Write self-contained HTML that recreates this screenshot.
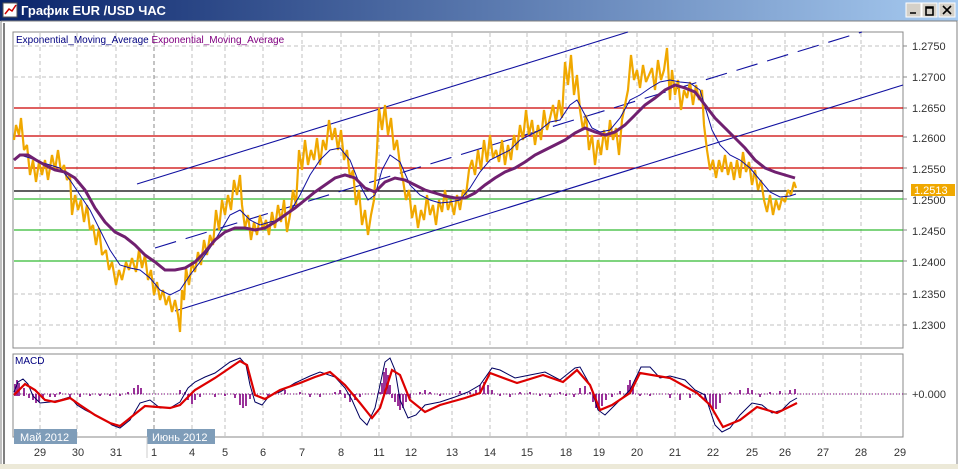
<!DOCTYPE html>
<html><head><meta charset="utf-8"><style>
html,body{margin:0;padding:0;width:958px;height:469px;overflow:hidden;background:#ece9d8;font-family:"Liberation Sans",sans-serif}
svg{display:block}
</style></head><body>
<svg width="958" height="469" xmlns="http://www.w3.org/2000/svg" font-family="Liberation Sans, DejaVu Sans, sans-serif">
<defs>
<linearGradient id="tb" x1="0" y1="0" x2="1" y2="0"><stop offset="0" stop-color="#0a246a"/><stop offset="1" stop-color="#a6caf0"/></linearGradient>
</defs>
<rect x="0" y="0" width="958" height="469" fill="#ece9d8"/>
<rect x="0" y="0" width="958" height="21" fill="url(#tb)"/>
<rect x="3" y="3" width="14" height="14" fill="#fff" stroke="#555"/>
<polyline points="5,14 9,9 12,11 16,5" fill="none" stroke="#c00" stroke-width="1.5"/>
<text x="21" y="15" fill="#fff" font-size="13" font-weight="bold">График EUR /USD  ЧАС</text>
<g fill="#d4d0c8" stroke="#fff"><rect x="906" y="3" width="15" height="14"/><rect x="922" y="3" width="15" height="14"/><rect x="939" y="3" width="16" height="14"/></g>
<path d="M910 13h6M926 7h7v8h-7zM926 8h7M943 6l8 8M951 6l-8 8" stroke="#000" stroke-width="1.6" fill="none"/>
<rect x="0" y="21" width="958" height="448" fill="#fff"/>
<rect x="1" y="21" width="956" height="446" fill="none" stroke="#808080"/>
<rect x="3" y="23" width="2" height="442" fill="#808080"/>
<rect x="0" y="464" width="958" height="5" fill="#ece9d8"/>
<rect x="13" y="32" width="890" height="316" fill="#fff" stroke="#888"/>
<rect x="13" y="354" width="890" height="83" fill="#fff" stroke="#888"/>
<g stroke="#c0c0c0" stroke-dasharray="4,3" stroke-width="1">
<path d="M40 33V348M77 33V348M116 33V348M192 33V348M225 33V348M263 33V348M302 33V348M341 33V348M379 33V348M411 33V348M452 33V348M490 33V348M527 33V348M566 33V348M599 33V348M637 33V348M675 33V348M713 33V348M752 33V348M785 33V348M823 33V348M861 33V348"/>
<path d="M40 355V437M77 355V437M116 355V437M192 355V437M225 355V437M263 355V437M302 355V437M341 355V437M379 355V437M411 355V437M452 355V437M490 355V437M527 355V437M566 355V437M599 355V437M637 355V437M675 355V437M713 355V437M752 355V437M785 355V437M823 355V437M861 355V437"/>
<path d="M14 46H902M14 77H902M14 294H902M14 325H902M14 394H902"/>
</g>
<path d="M154 33V348M154 355V437" stroke="#888" stroke-dasharray="4,3"/>
<text x="16" y="43" font-size="10" fill="#000080">Exponential_Moving_Average <tspan fill="#800080">Exponential_Moving_Average</tspan></text>
<g stroke-width="1.2">
<path d="M14 108H903M14 136H903M14 168H903" stroke="#cc0000"/>
<path d="M14 199H903M14 230H903M14 261H903" stroke="#33bb33"/>
<path d="M14 191H903" stroke="#000"/>
</g>
<g stroke="#1010a0" stroke-width="1.1" fill="none">
<path d="M137 184L628 32"/>
<path d="M175 311L903 85"/>
<path d="M155 248L862 32" stroke-dasharray="22,10"/>
</g>
<polyline fill="none" stroke="#f0a800" stroke-width="2.2" stroke-linejoin="bevel" points="14,140 16,125 19,135 21,118 24,150 27,145 30,175 33,160 36,182 39,162 42,175 45,160 48,180 52,155 55,170 58,150 61,172 64,165 67,180 70,175 72,215 75,195 78,210 81,200 84,222 87,205 90,230 93,225 96,245 99,228 102,255 106,250 109,270 112,262 116,285 119,270 122,280 126,262 129,270 132,258 136,272 139,250 142,268 145,255 148,280 151,270 154,295 157,282 160,300 163,290 166,305 169,296 172,312 175,300 178,315 180,332 182,290 184,300 186,268 189,285 192,262 195,272 198,252 201,265 204,240 207,255 210,235 213,245 216,210 219,230 222,200 225,215 228,195 231,210 234,180 237,195 240,175 242,205 245,228 248,215 251,240 254,222 257,235 260,215 263,230 266,220 269,235 272,212 275,228 278,205 281,222 284,200 287,232 290,215 293,190 296,205 299,150 302,170 305,140 308,165 311,150 314,160 317,138 320,165 323,140 326,150 329,120 332,140 335,128 338,150 341,130 344,160 347,150 350,178 353,170 356,205 359,190 362,225 365,210 368,235 371,215 374,200 377,150 379,108 382,130 385,105 388,135 391,118 394,150 397,140 400,165 403,180 406,200 409,190 412,218 415,205 418,228 421,210 424,220 427,195 430,215 433,205 436,225 439,200 442,212 445,190 448,210 451,200 454,215 457,195 460,210 463,190 466,195 469,170 472,160 475,175 478,150 481,170 484,140 487,162 490,135 493,158 496,150 499,162 502,140 505,165 508,145 511,160 514,135 517,150 520,125 523,140 526,110 529,135 532,120 535,145 538,125 541,140 544,110 547,130 550,118 553,105 556,122 559,100 562,118 565,62 568,85 571,55 574,95 577,75 580,110 583,130 586,115 589,150 592,135 595,165 598,140 601,155 604,130 607,150 610,120 613,140 616,128 619,155 622,120 625,105 628,90 631,55 634,80 637,70 640,88 643,65 646,82 649,75 652,68 655,90 658,60 661,80 664,70 667,48 670,100 672,70 675,95 678,80 681,110 684,90 687,98 690,82 693,105 696,85 699,100 702,90 704,125 707,150 710,170 713,160 716,178 719,160 722,172 725,155 728,175 731,162 734,180 737,160 740,178 743,152 746,172 749,162 752,185 755,170 758,190 761,180 764,200 767,212 770,195 773,215 776,200 779,210 782,198 785,202 788,190 791,195 794,182 796,188"/>
<polyline fill="none" stroke="#1010a0" stroke-width="1" points="14,160 20,155 30,158 40,162 50,165 60,168 70,180 80,195 90,210 100,230 110,250 120,265 130,268 140,270 150,278 160,290 170,295 180,290 190,275 200,262 210,248 220,232 230,215 240,210 250,220 260,225 270,222 280,220 290,212 300,195 310,175 320,160 330,150 340,148 350,160 360,185 368,200 375,195 382,170 390,155 400,162 410,185 420,195 430,200 440,203 450,202 460,200 470,188 480,172 490,160 500,155 510,150 520,140 530,135 540,130 550,122 560,120 570,105 577,100 585,115 592,128 600,132 610,130 620,118 630,100 640,95 650,88 660,82 670,80 680,82 690,83 700,90 706,110 712,130 720,145 730,155 740,160 750,168 760,180 770,192 780,197 790,196 796,194"/>
<polyline fill="none" stroke="#702070" stroke-width="3" points="14,160 20,155 28,155 36,160 45,165 55,170 65,172 75,178 85,190 95,208 105,222 115,232 125,237 135,245 145,255 155,262 165,270 175,270 185,268 195,262 205,252 215,240 225,232 235,228 245,228 255,230 265,228 275,222 285,215 295,208 305,200 315,192 325,185 335,178 345,175 355,178 365,188 375,192 385,182 395,178 405,180 415,185 425,190 435,193 445,196 455,198 465,198 475,193 485,185 495,178 505,172 515,168 525,162 535,155 545,150 555,145 565,140 575,133 585,128 595,132 605,135 615,132 625,125 635,115 645,105 655,98 665,90 675,85 685,88 695,92 705,105 715,118 725,128 735,138 745,148 755,160 765,168 775,172 785,175 795,178"/>
<rect x="911" y="184" width="44" height="12" fill="#f0a800"/>
<text x="914" y="194" font-size="11" fill="#fff">1.2513</text>
<g font-size="11" fill="#333">
<text x="912" y="50">1.2750</text><text x="912" y="81">1.2700</text><text x="912" y="112">1.2650</text><text x="912" y="142">1.2600</text><text x="912" y="173">1.2550</text><text x="912" y="204">1.2500</text><text x="912" y="235">1.2450</text><text x="912" y="266">1.2400</text><text x="912" y="298">1.2350</text><text x="912" y="329">1.2300</text><text x="912" y="398">+0.000</text>
</g>
<g stroke="#888"><path d="M903 46h4M903 77h4M903 108h4M903 137h4M903 168h4M903 199h4M903 230h4M903 261h4M903 294h4M903 325h4M903 394h4"/></g>
<text x="15" y="364" font-size="10" fill="#000080">MACD</text>
<path d="M14 394H903" stroke="#800080" stroke-dasharray="1,2"/>
<g stroke="#800080" stroke-width="1.6">
<path d="M15 384V396M17 380V396M19 383V396M24 388V396M29 394V398M33 394V400M36 394V403M39 394V402M43 394V399M50 394V397M55 394V397M60 392V394M70 394V397M80 394V397M90 394V396M100 394V396M110 394V396M120 394V396M128 392V394M134 388V394M138 385V394M141 388V394M180 390V394M185 392V394M188 394V400M192 394V404M195 394V400M200 394V397M215 394V397M225 394V396M235 394V398M240 394V405M243 394V408M246 394V406M250 394V399M268 394V397M275 392V394M285 390V394M300 392V394M310 394V397M320 394V397M335 392V394M340 390V394M345 394V398M350 394V402M355 394V400M360 394V397M380 392V394M382 383V394M384 372V394M386 368V394M388 375V394M390 385V394M392 394V398M395 394V402M398 394V406M400 394V410M403 394V408M406 394V402M410 394V398M420 392V394M425 390V394M430 392V394M440 394V396M460 391V394M470 392V394M476 390V394M480 385V394M484 382V394M488 385V394M492 390V394M500 394V396M510 394V397M520 392V394M530 392V394M540 394V396M550 394V397M560 392V394M566 394V396M574 394V397M580 388V394M585 386V394M590 392V394M593 394V402M596 394V408M599 394V410M602 394V406M606 394V400M612 394V397M620 391V394M628 385V394M630 380V394M633 386V394M640 394V396M650 394V396M670 394V398M680 394V400M690 394V398M700 394V397M705 394V400M710 394V407M713 394V411M716 394V409M720 394V403M730 392V394M740 390V394M748 388V394M752 390V394M760 394V397M770 392V394M780 391V394M790 390V394M795 389V394"/>
</g>
<polyline fill="none" stroke="#000060" stroke-width="1" points="14,392 18,382 23,379 28,384 33,396 40,403 50,402 60,400 70,397 77,405 85,410 95,415 105,420 112,425 120,428 130,420 140,403 150,400 160,408 170,408 180,402 188,388 195,382 205,377 215,373 230,362 240,358 246,365 250,385 255,402 262,405 270,395 280,392 295,383 310,376 320,372 335,377 345,388 352,400 360,418 367,425 375,408 385,362 390,358 395,370 400,400 408,418 416,415 425,405 440,402 455,397 468,392 480,385 492,368 500,370 515,378 530,375 545,372 560,380 575,368 580,367 590,385 598,410 605,415 615,405 630,390 641,367 650,367 660,378 670,376 685,380 695,390 705,395 715,425 722,432 730,428 740,415 752,403 762,405 772,413 782,410 790,402 797,398"/>
<polyline fill="none" stroke="#dd0000" stroke-width="2.2" points="14,395 25,384 35,390 45,400 55,402 70,398 80,405 95,415 110,423 120,426 130,418 145,406 170,408 180,405 195,390 215,378 240,361 247,365 255,395 265,399 280,390 300,383 315,377 330,372 345,385 360,403 372,418 380,408 392,370 400,375 410,400 425,412 440,405 465,398 480,393 490,373 517,383 543,375 563,382 577,370 590,385 600,410 612,405 630,393 640,373 670,378 697,393 710,405 723,427 740,420 757,407 777,413 797,403"/>
<rect x="14" y="429" width="63" height="15" fill="#7f9db9"/>
<text x="20" y="441" font-size="11" fill="#fff">Май 2012</text>
<rect x="147" y="429" width="68" height="15" fill="#7f9db9"/>
<text x="152" y="441" font-size="11" fill="#fff">Июнь 2012</text>
<path d="M147 437V458" stroke="#ccc"/>
<g font-size="11" fill="#333" text-anchor="middle">
<text x="40" y="456">29</text><text x="78" y="456">30</text><text x="116" y="456">31</text><text x="154" y="456">1</text><text x="192" y="456">4</text><text x="225" y="456">5</text><text x="263" y="456">6</text><text x="302" y="456">7</text><text x="341" y="456">8</text><text x="379" y="456">11</text><text x="411" y="456">12</text><text x="452" y="456">13</text><text x="490" y="456">14</text><text x="527" y="456">15</text><text x="566" y="456">18</text><text x="599" y="456">19</text><text x="637" y="456">20</text><text x="675" y="456">21</text><text x="713" y="456">22</text><text x="752" y="456">25</text><text x="785" y="456">26</text><text x="823" y="456">27</text><text x="861" y="456">28</text><text x="900" y="456">29</text>
</g>
</svg>
</body></html>
